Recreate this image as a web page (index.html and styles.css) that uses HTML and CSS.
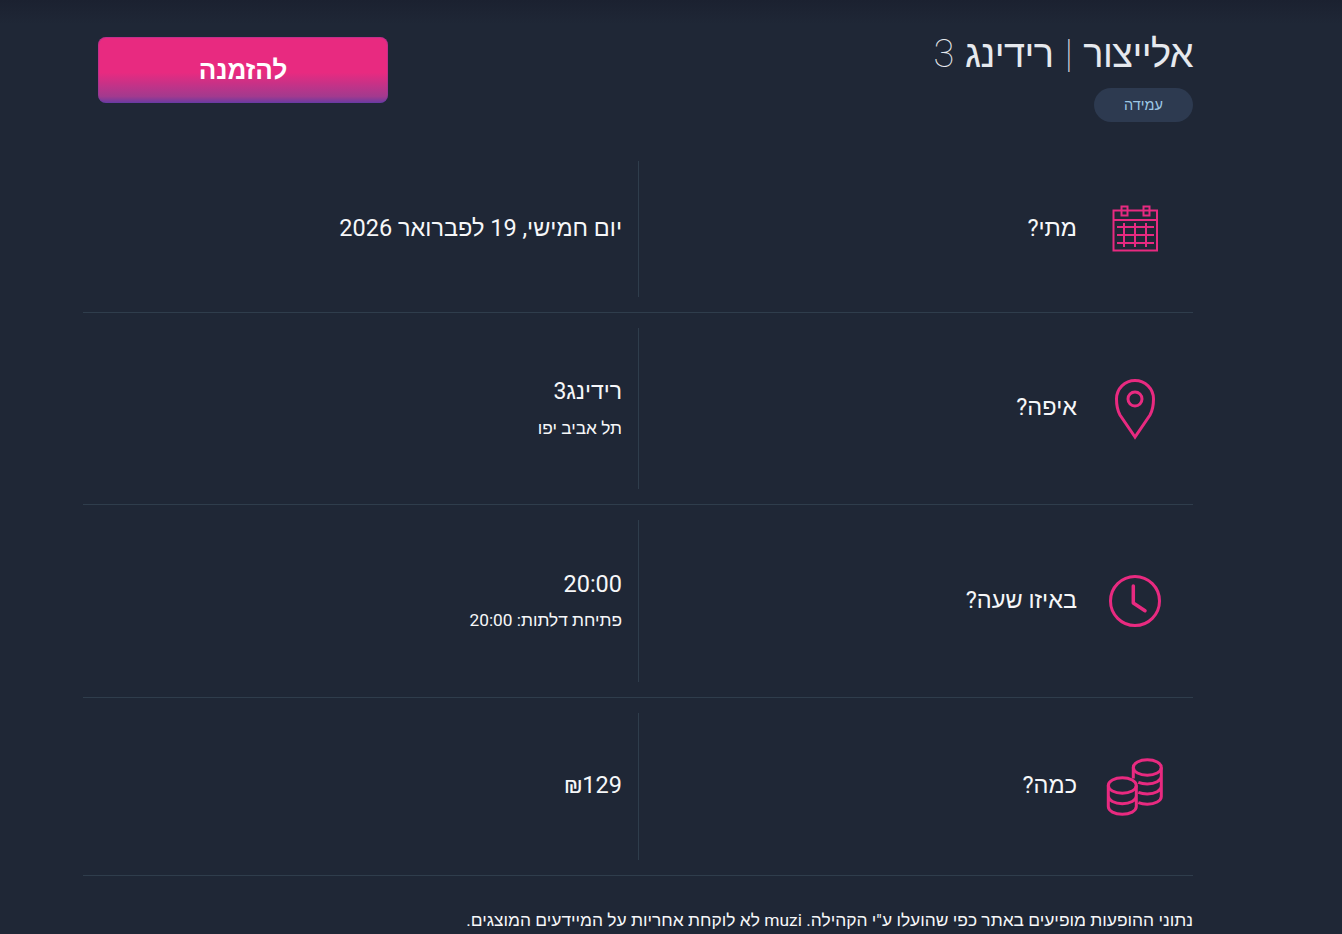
FILE: index.html
```html
<!DOCTYPE html>
<html lang="he" dir="rtl">
<head>
<meta charset="utf-8">
<title>אלייצור | רידינג 3</title>
<link rel="stylesheet" href="styles.css">
</head>
<body>
<main class="page">
  <header class="head">
    <div class="head-info">
      <h1 class="title">אלייצור | רידינג 3</h1>
      <span class="badge">עמידה</span>
    </div>
    <a class="cta" href="#">להזמנה</a>
  </header>

  <section class="row row-when">
    <div class="label-cell">
      <div class="icon-slot">
        <svg class="icon" width="48" height="48" viewBox="0 0 48 48"><path d="M2.500 5.500h43.500v40h-43.500zM2.500 15h43.500M10.500 1.500h6v9h-6zM32.500 1.500h6v9h-6zM6 22h37M6 30h37M6 38h37M13 18v24M24 18v24M35 18v24"/></svg>
      </div>
      <span class="label">מתי?</span>
    </div>
    <div class="value-cell"><div class="value value-date">יום חמישי, 19 לפברואר 2026</div></div>
  </section>

  <section class="row row-where">
    <div class="label-cell">
      <div class="icon-slot">
        <svg class="icon thick" width="48" height="64" viewBox="0 0 48 64"><path d="M24 60 9 38C6.500 33.500 5.500 27 5.500 22a18.500 18.500 0 0 1 37 0c0 5-1 11.500-3.500 16z"/><circle cx="24" cy="22" r="7"/></svg>
      </div>
      <span class="label">איפה?</span>
    </div>
    <div class="value-cell">
      <div class="value value-place">רידינג3</div>
      <div class="sub">תל אביב יפו</div>
    </div>
  </section>

  <section class="row row-time">
    <div class="label-cell">
      <div class="icon-slot">
        <svg class="icon thick" width="54" height="54" viewBox="0 0 54 54"><circle cx="27" cy="27" r="24.500"/><path class="round" d="M25.300 12v17L37 36.700"/></svg>
      </div>
      <span class="label">באיזו שעה?</span>
    </div>
    <div class="value-cell">
      <div class="value">20:00</div>
      <div class="sub">פתיחת דלתות: 20:00</div>
    </div>
  </section>

  <section class="row row-price">
    <div class="label-cell">
      <div class="icon-slot">
        <svg class="icon thick" width="58" height="60" viewBox="0 0 58 60"><ellipse cx="41.300" cy="10.500" rx="14" ry="7.700"/><path d="M27.300 10.500v11M55.300 10.500v29c0 4.300-6.300 7.700-14 7.700-3.400 0-6.500-.6-9-1.600M55.300 19.300c0 4.300-6.300 7.700-14 7.700-3.400 0-6.500-.6-9-1.600M55.300 29.300c0 4.300-6.300 7.700-14 7.700-3.400 0-6.500-.6-9-1.600"/><ellipse cx="16.300" cy="28.500" rx="14" ry="7.700"/><path d="M2.300 28.500v21.100c0 4.300 6.300 7.700 14 7.700s14-3.400 14-7.700V28.500M2.300 39c0 4.300 6.300 7.700 14 7.700s14-3.400 14-7.700"/></svg>
      </div>
      <span class="label">כמה?</span>
    </div>
    <div class="value-cell"><div class="value value-price">₪129</div></div>
  </section>

  <p class="note">נתוני ההופעות מופיעים באתר כפי שהועלו ע"י הקהילה. muzi לא לוקחת אחריות על המיידעים המוצגים.</p>
</main>
</body>
</html>
```
FILE: styles.css
```css
* { box-sizing: border-box; }
html, body { height: 100%; }
body {
  margin: 0;
  overflow: hidden;
  background: linear-gradient(#1b2130 0, #1f2736 24px, #1f2736 100%);
  color: #f6f7f9;
  font-family: Roboto, "Noto Sans", sans-serif;
}
.page {
  width: 1110px;
  margin-right: 149px;
}
.head {
  display: flex;
  justify-content: space-between;
  align-items: flex-start;
  height: 146px;
  padding-top: 29px;
}
.head-info {
  display: flex;
  flex-direction: column;
  align-items: flex-start;
}
.title {
  margin: 0;
  font-size: 38px;
  letter-spacing: -0.600px;
  word-spacing: 3px;
  line-height: 50px;
  font-weight: 100;
  color: #e6e9ee;
}
.badge {
  display: block;
  width: 99px;
  height: 34px;
  margin-top: 9px;
  border-radius: 17px;
  background: #2d3a50;
  color: #9cc8e6;
  font-size: 14.500px;
  font-weight: 300;
  line-height: 35px;
  text-align: center;
}
.cta {
  display: block;
  width: 290px;
  height: 66px;
  margin-top: 8px;
  margin-left: 15px;
  border-radius: 8px;
  background: linear-gradient(#e82a80 0, #e82a80 54%, #a23a8e 90%, #6a3aa0 100%);
  box-shadow: inset 0 0 0 1px rgba(100, 60, 170, .3);
  color: #fff;
  font-size: 26px;
  font-weight: 700;
  line-height: 66px;
  text-align: center;
  text-decoration: none;
}
.row {
  display: flex;
  padding: 15px 0;
  border-bottom: 1px solid #2f3d4c;
}
.row-when { height: 167px; }
.row-where { height: 192px; }
.row-time { height: 193px; }
.row-price { height: 178px; }
.label-cell {
  width: 555px;
  display: flex;
  align-items: center;
  border-left: 1px solid #2f3d4c;
}
.icon-slot {
  flex: none;
  width: 116px;
  display: flex;
  justify-content: center;
}
.icon {
  display: block;
  fill: none;
  stroke: #e82a80;
  stroke-width: 2;
}
.icon.thick { stroke-width: 3; }
.icon .round { stroke-linecap: round; stroke-linejoin: round; stroke-width: 3.500; }
.label {
  font-size: 23.500px;
  font-weight: 400;
  line-height: 30px;
  margin-top: -3px;
}
.value-cell {
  flex: 1;
  padding-right: 16px;
  display: flex;
  flex-direction: column;
  justify-content: center;
}
.value {
  font-size: 23.500px;
  font-weight: 400;
  line-height: 30px;
  margin-top: -2px;
}
.value-place { font-size: 23px; margin-top: 0; }
.value-price { margin-top: -4px; }
.sub {
  margin-top: 9px;
  font-size: 17.300px;
  font-weight: 400;
  line-height: 24px;
}
.note {
  margin: 31px 0 0;
  font-size: 17.400px;
  font-weight: 400;
  line-height: 26px;
}
```
